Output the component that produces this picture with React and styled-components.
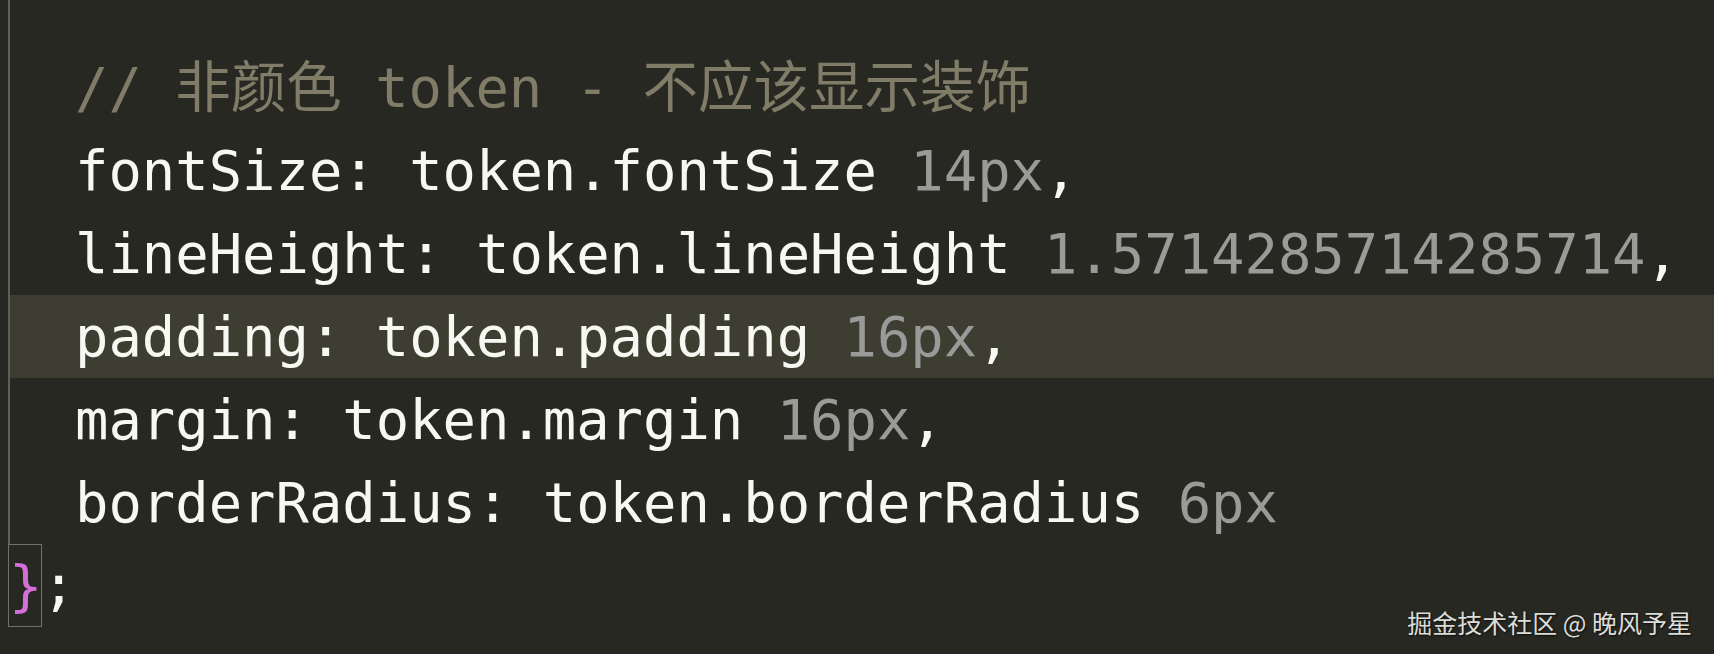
import React from 'react';
import styled, { createGlobalStyle } from 'styled-components';

const GlobalStyle = createGlobalStyle`
  html, body {
    margin: 0;
    padding: 0;
    background: #272822;
  }
  #root {
    height: 654px;
  }
`;

const Editor = styled.div`
  position: relative;
  height: 654px;
  overflow: hidden;
  background: #272822;
  padding-left: 8px;
  font-family: 'DejaVu Sans Mono', 'Noto Sans CJK SC', monospace;
  font-size: 55.5px;
  color: #f8f8f2;
  white-space: pre;
`;

// block body, with the indent guide on its left
const Block = styled.div`
  border-left: 2px solid #5f5f57;
  padding-top: 46px;
`;

const Line = styled.div`
  height: 83px;
  line-height: 83px;
  padding-left: 65px;
  background: ${({ $active }) => ($active ? '#3e3d32' : 'transparent')};
`;

const Comment = styled.span`
  color: #807c68;
`;

const Hint = styled.span`
  color: #9a9a98;
`;

const CloseLine = styled.div`
  display: flex;
  height: 83px;
  line-height: 81px;
`;

const BracketMatch = styled.span`
  box-sizing: border-box;
  width: 34px;
  height: 83px;
  border: 1px solid #717168;
  color: #d46fd8;
`;

const Watermark = styled.div`
  position: absolute;
  right: 22px;
  bottom: 14px;
  font-family: 'Noto Sans CJK SC', 'Noto Sans', sans-serif;
  font-size: 25px;
  color: #dcdcd8;
  text-shadow: 1px 1px 2px rgba(0, 0, 0, 0.7);
  white-space: nowrap;
`;

const props = [
  { key: 'fontSize', value: '14px' },
  { key: 'lineHeight', value: '1.5714285714285714' },
  { key: 'padding', value: '16px', active: true },
  { key: 'margin', value: '16px' },
  { key: 'borderRadius', value: '6px', last: true },
];

const App = () => (
  <>
    <GlobalStyle />
    <Editor>
      <Block>
        <Line>
          <Comment>// 非颜色 token - 不应该显示装饰</Comment>
        </Line>
        {props.map((p) => (
          <Line key={p.key} $active={p.active}>
            {`${p.key}: token.${p.key} `}
            <Hint>{p.value}</Hint>
            {p.last ? '' : ','}
          </Line>
        ))}
      </Block>
      <CloseLine>
        <BracketMatch>{'}'}</BracketMatch>
        <span>;</span>
      </CloseLine>
      <Watermark>掘金技术社区 @ 晚风予星</Watermark>
    </Editor>
  </>
);

export default App;
